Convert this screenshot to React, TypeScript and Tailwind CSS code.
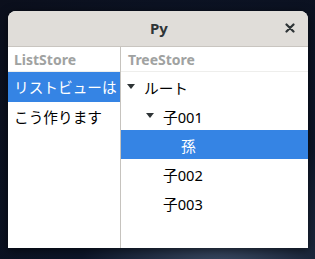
const font = { fontFamily: '"Noto Sans", "Noto Sans CJK JP", sans-serif' }

const Expander = () => (
  <svg width="8" height="5" viewBox="0 0 8 5" className="shrink-0">
    <path d="M0 0 L8 0 L4 5 Z" fill="#2e3436" />
  </svg>
)

const treeRows = [
  { label: "ルート", level: 0, expander: true },
  { label: "子001", level: 1, expander: true },
  { label: "孫", level: 2, expander: false, selected: true },
  { label: "子002", level: 1, expander: false },
  { label: "子003", level: 1, expander: false },
]

export default function App() {
  return (
    <div
      className="w-[315px] h-[259px] overflow-hidden pt-[11px] pl-[8px] bg-[radial-gradient(ellipse_at_70%_110%,#3a4a63_0%,#0c1528_45%,#0b0f1c_100%)]"
      style={font}
    >
      <div className="w-[300px] h-[237px] flex flex-col rounded-t-[8px] overflow-hidden bg-white shadow-[0_2px_10px_rgba(0,0,0,0.6)]">
        {/* title bar */}
        <div className="h-[36px] shrink-0 bg-[#e0ddd9] border-b border-[#c9c5c0] flex items-center relative">
          <span className="flex-1 text-center text-[15px] font-bold text-[#2e3436] pl-[2px]">Py</span>
          <span className="absolute right-[11px] top-[10px] w-[14px] h-[14px] flex items-center justify-center">
            <svg width="10" height="10" viewBox="0 0 10 10">
              <path d="M1.5 1.5 L8.5 8.5 M8.5 1.5 L1.5 8.5" stroke="#2e3436" strokeWidth="2.2" strokeLinecap="round" />
            </svg>
          </span>
        </div>

        <div className="flex flex-1">
          {/* list column */}
          <div className="w-[113px] shrink-0 border-r border-[#c6c3be] flex flex-col">
            <div className="h-[25px] border-b border-[#eeeeec] px-[6px] flex items-center text-[14px] font-bold text-[#a0a2a1]">
              ListStore
            </div>
            <div className="h-[30px] px-[6px] flex items-center bg-[#3584e4] text-white text-[14.67px] whitespace-nowrap overflow-hidden">
              リストビューは
            </div>
            <div className="h-[30px] px-[6px] flex items-center text-black text-[14.67px] whitespace-nowrap">
              こう作ります
            </div>
          </div>

          {/* tree column */}
          <div className="flex-1 flex flex-col">
            <div className="h-[25px] border-b border-[#eeeeec] px-[7px] flex items-center text-[14px] font-bold text-[#a0a2a1]">
              TreeStore
            </div>
            {treeRows.map((r) => (
              <div
                key={r.label}
                className={`h-[29px] flex items-center text-[14.67px] ${r.selected ? "bg-[#3584e4] text-white" : "text-black"}`}
              >
                <div
                  className={`flex items-center shrink-0 ${
                    r.level === 0 ? "pl-[6px]" : r.level === 1 ? "pl-[25px]" : "pl-[43px]"
                  }`}
                >
                  <div className="w-[17px] flex items-center">{r.expander ? <Expander /> : null}</div>
                </div>
                <span className="pt-[3px]">{r.label}</span>
              </div>
            ))}
          </div>
        </div>
      </div>
    </div>
  )
}
